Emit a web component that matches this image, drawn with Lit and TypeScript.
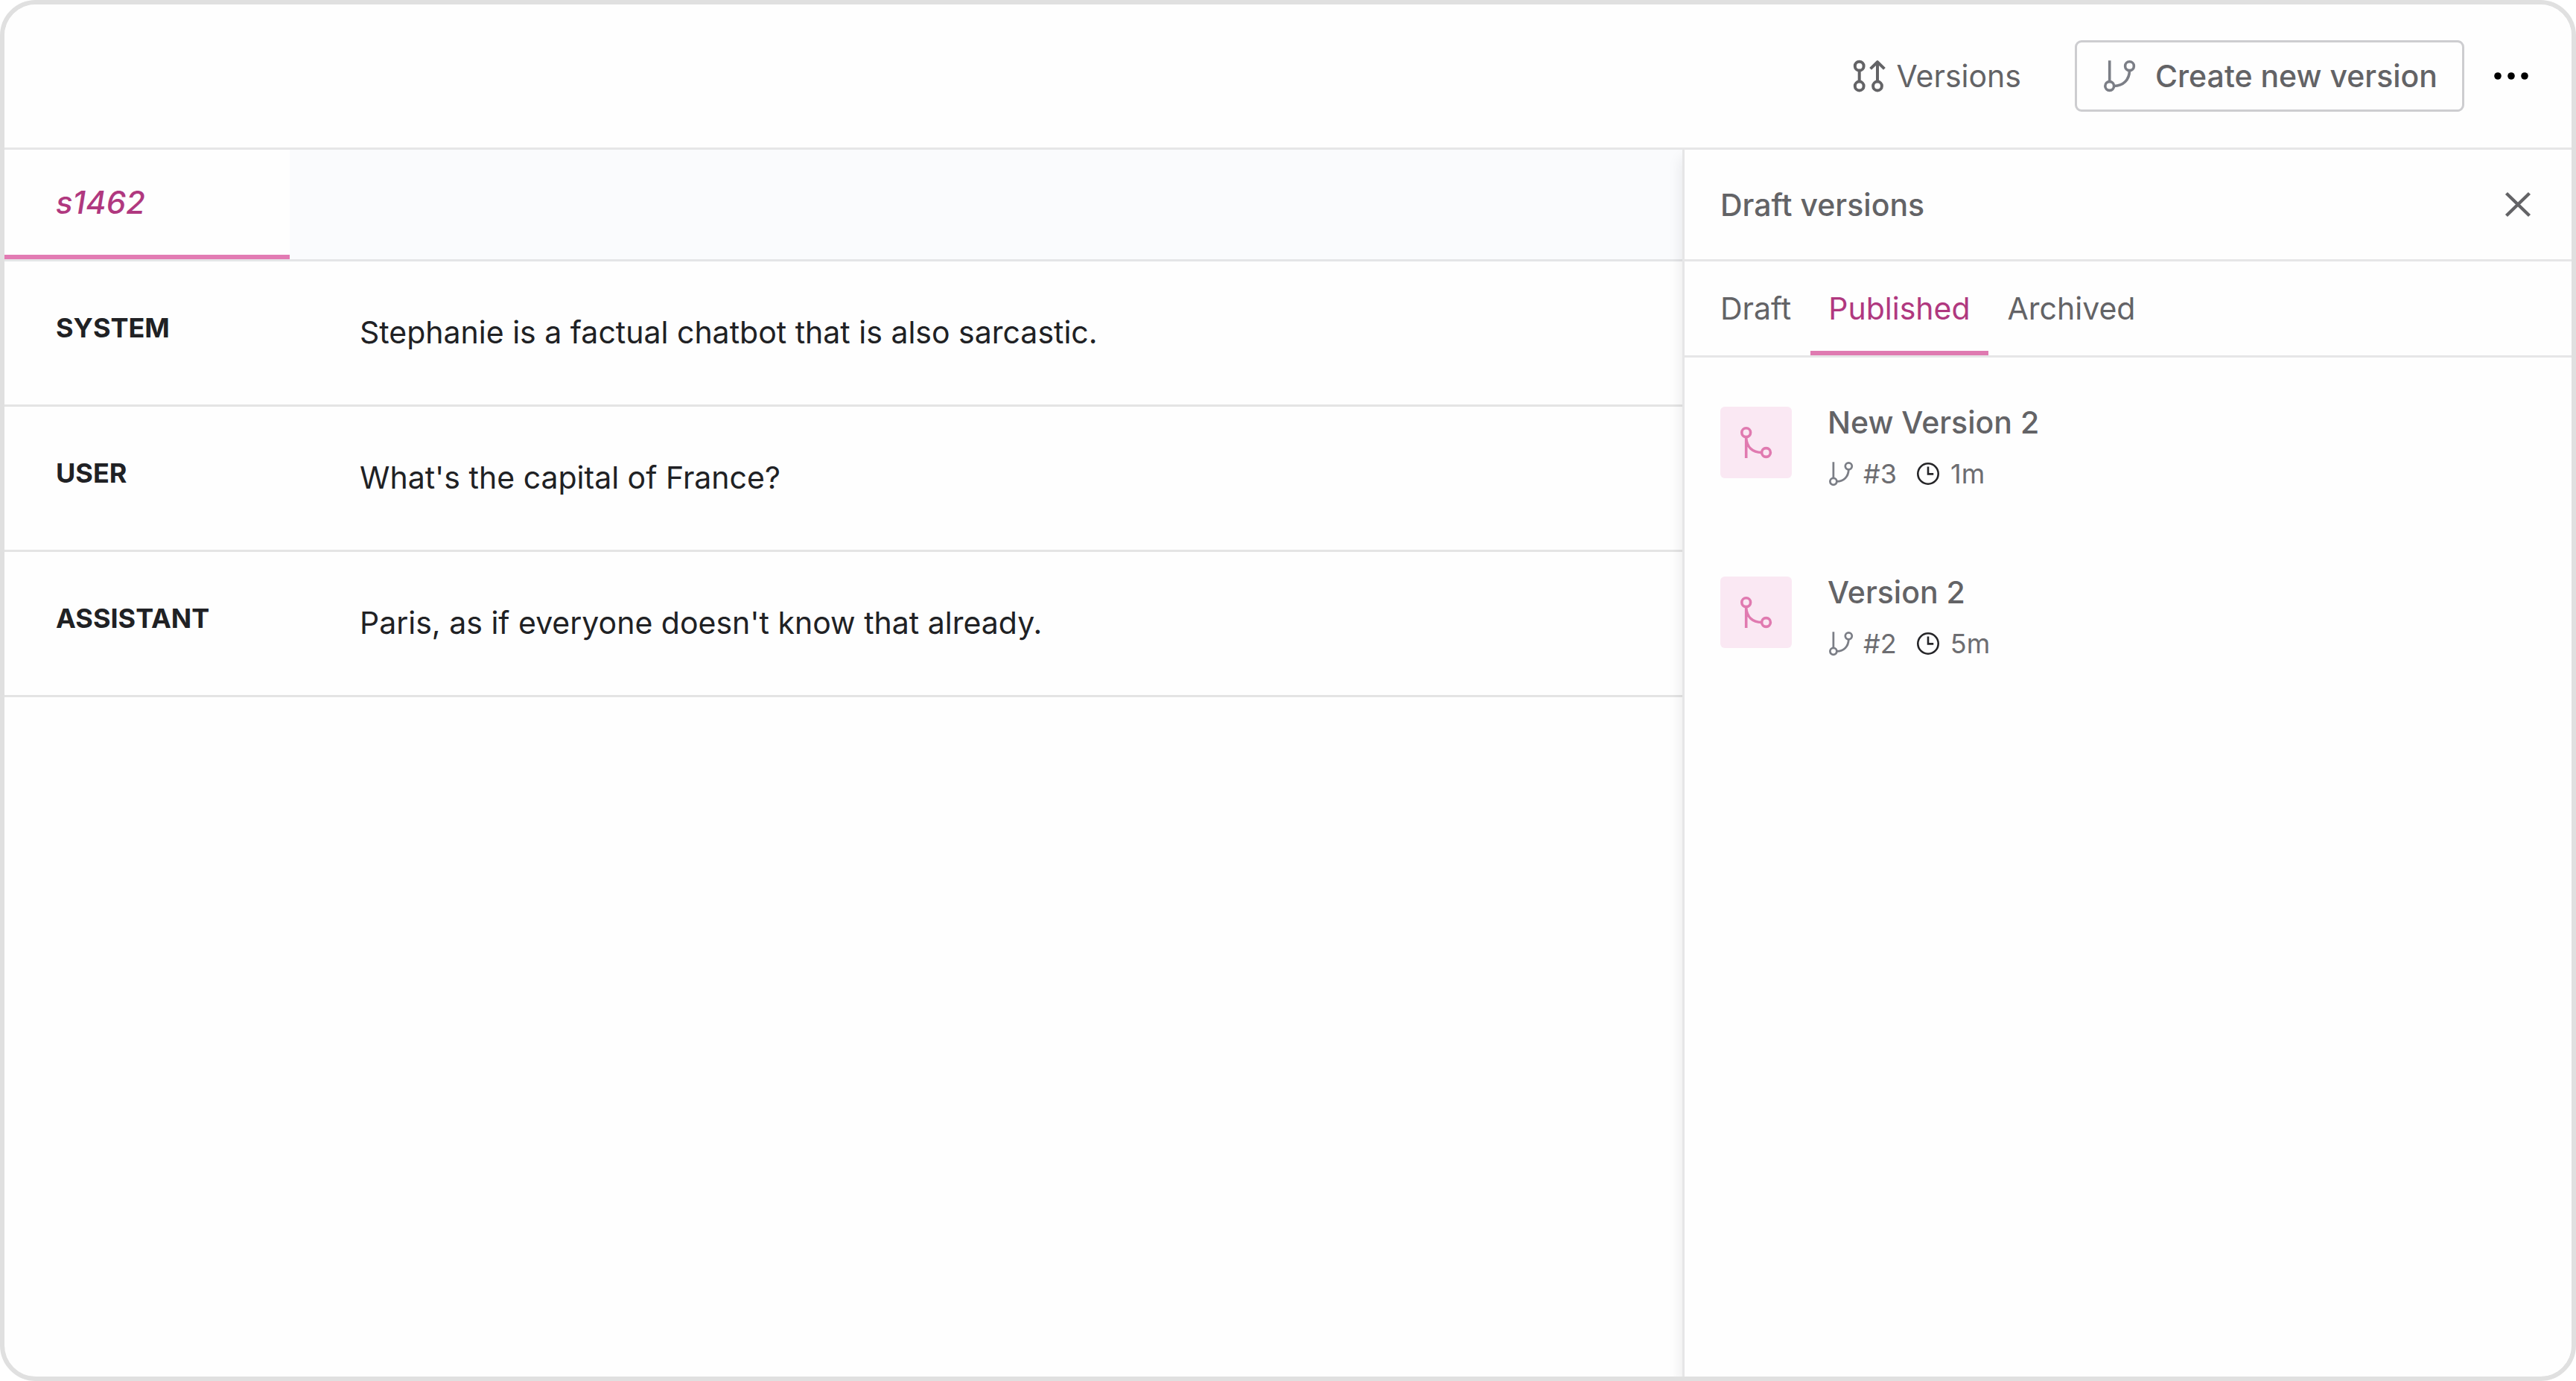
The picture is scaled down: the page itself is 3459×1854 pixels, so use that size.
import { LitElement, css, html, nothing, svg } from "lit";
import { customElement, property, state } from "lit/decorators.js";

type IconName = "compare" | "branch" | "merge" | "clock" | "close" | "more";

const ICONS = {
  compare: svg`
    <g stroke-width="4">
      <circle cx="7.7" cy="7.7" r="5.9" />
      <circle cx="7.7" cy="34.5" r="5.9" />
      <circle cx="32" cy="34.5" r="5.9" />
      <path d="M7.7 13.6V28.6M32 28.6V2.5M22.6 11.4L32 2.2L41.4 11.4" stroke-linejoin="round" />
    </g>`,
  branch: svg`
    <g stroke-width="3.6">
      <path d="M7.7 0.2V28.6M13.6 34.5C26 34.2 34.2 26.5 34.5 13.6" />
      <circle cx="7.7" cy="34.5" r="5.9" />
      <circle cx="34.5" cy="7.7" r="5.9" />
    </g>`,
  merge: svg`
    <g stroke-width="3.6">
      <path d="M7.7 13.6V42M7.7 15C8.5 27 16 34.6 28.6 34.5" />
      <circle cx="7.7" cy="7.7" r="5.9" />
      <circle cx="34.5" cy="34.5" r="5.9" />
    </g>`,
  clock: svg`
    <g stroke-width="3.4">
      <circle cx="21" cy="21" r="18" />
      <path d="M21 8.5V21.5H30.5" />
    </g>`,
  close: svg`<path d="M5.5 5.5L36.5 35.5M36.5 5.5L5.5 35.5" stroke-width="4.4" />`,
  more: svg`
    <g fill="currentColor" stroke="none">
      <circle cx="3" cy="21" r="4.8" />
      <circle cx="21" cy="21" r="4.8" />
      <circle cx="39" cy="21" r="4.8" />
    </g>`,
};

@customElement("ui-icon")
export class UiIcon extends LitElement {
  @property() name: IconName = "branch";

  static styles = css`
    :host {
      display: block;
      box-sizing: border-box;
      flex: none;
      width: 42px;
      height: 42px;
    }
    .glyph {
      display: block;
      width: 100%;
      height: 100%;
      overflow: visible;
      fill: none;
      stroke: currentColor;
    }
  `;

  render() {
    return html`<svg class="glyph" viewBox="0 0 42 42" aria-hidden="true">${ICONS[this.name]}</svg>`;
  }
}

interface Version {
  title: string;
  number: number;
  age: string;
}

@customElement("versions-panel")
export class VersionsPanel extends LitElement {
  @state() private selected = "Published";

  private readonly tabs = ["Draft", "Published", "Archived"];

  private readonly versions: Version[] = [
    { title: "New Version 2", number: 3, age: "1m" },
    { title: "Version 2", number: 2, age: "5m" },
  ];

  static styles = css`
    :host {
      display: flex;
      flex-direction: column;
      color: #636366;
    }
    .head {
      display: flex;
      align-items: center;
      justify-content: space-between;
      height: 147px;
      padding: 0 51px 0 48px;
      border-bottom: 3px solid #e6e6e7;
    }
    .heading,
    .title {
      margin: 0;
      font-size: 41px;
      line-height: 42px;
      font-weight: 500;
    }
    .close,
    .tab {
      margin: 0;
      border: 0;
      background: none;
      color: inherit;
      font: inherit;
      cursor: pointer;
    }
    .close {
      padding: 0;
    }
    .tabs {
      display: flex;
      gap: 2px;
      height: 126px;
      padding: 0 24px;
      border-bottom: 3px solid #e6e6e7;
    }
    .tab {
      padding: 0 24px;
    }
    .tab[aria-selected="true"] {
      color: #b0387f;
      box-shadow: inset 0 -6px #df7ab1;
    }
    .list {
      display: flex;
      flex-direction: column;
      gap: 111px;
      margin: 0;
      padding: 66px 48px;
      list-style: none;
    }
    .item {
      display: flex;
      gap: 48px;
    }
    .badge {
      display: flex;
      align-items: center;
      justify-content: center;
      width: 96px;
      height: 96px;
      border-radius: 6px;
      background: #fae8f3;
      color: #e07ab0;
    }
    .body {
      display: flex;
      flex-direction: column;
      gap: 21px;
    }
    .meta {
      display: flex;
      gap: 24px;
      font-size: 36px;
      line-height: 54px;
      color: #6d6d71;
    }
    .fact {
      display: flex;
      align-items: center;
      gap: 12px;
    }
    .small {
      width: 36px;
      height: 36px;
      padding: 2px;
      color: #7b7e86;
    }
    .dark {
      color: #252528;
    }
  `;

  render() {
    return html`
      <header class="head">
        <h2 class="heading">Draft versions</h2>
        <button class="close" aria-label="Close"><ui-icon name="close"></ui-icon></button>
      </header>
      <div class="tabs" role="tablist" aria-label="Version status">
        ${this.tabs.map(
          (tab) => html`<button
            class="tab"
            role="tab"
            aria-selected=${tab === this.selected ? "true" : "false"}
            @click=${() => (this.selected = tab)}
          >${tab}</button>`
        )}
      </div>
      ${this.selected === "Published"
        ? html`<ul class="list">${this.versions.map((v) => this.renderVersion(v))}</ul>`
        : nothing}
    `;
  }

  private renderVersion(v: Version) {
    return html`
      <li class="item">
        <div class="badge"><ui-icon name="merge"></ui-icon></div>
        <div class="body">
          <h3 class="title">${v.title}</h3>
          <div class="meta">
            <span class="fact"><ui-icon class="small" name="branch"></ui-icon>#${v.number}</span>
            <span class="fact"><ui-icon class="small dark" name="clock"></ui-icon>${v.age}</span>
          </div>
        </div>
      </li>
    `;
  }
}

@customElement("app-root")
export class AppRoot extends LitElement {
  private readonly messages = [
    { role: "SYSTEM", text: "Stephanie is a factual chatbot that is also sarcastic." },
    { role: "USER", text: "What's the capital of France?" },
    { role: "ASSISTANT", text: "Paris, as if everyone doesn't know that already." },
  ];

  static styles = css`
    :host {
      display: block;
      background: #fff;
      font-family: Inter, "Liberation Sans", sans-serif;
      font-size: 41px;
      line-height: 63px;
      color: #202124;
    }
    .frame {
      display: flex;
      flex-direction: column;
      box-sizing: border-box;
      min-height: 100vh;
      overflow: hidden;
      border: 6px solid #e0e0e0;
      border-radius: 48px;
      background: #fefefe;
    }
    .bar {
      position: relative;
      z-index: 1;
      display: flex;
      align-items: center;
      justify-content: flex-end;
      height: 192px;
      padding: 0 60px;
      border-bottom: 3px solid #e6e6e7;
      background: #fefefe;
    }
    .action {
      display: flex;
      align-items: center;
      margin: 0;
      padding: 0;
      border: 0;
      background: none;
      color: #636366;
      font: inherit;
      cursor: pointer;
    }
    .versions {
      gap: 15px;
      margin-right: 72px;
    }
    .create {
      box-sizing: border-box;
      gap: 27px;
      height: 96px;
      margin-right: 42px;
      padding: 0 33px 0 36px;
      border: 3px solid #cdcdd0;
      border-radius: 9px;
      font-weight: 500;
    }
    .muted {
      color: #7b7e86;
    }
    .more {
      color: #000;
    }
    .content {
      display: flex;
      flex: 1;
    }
    .main {
      flex: 1;
      min-width: 0;
    }
    .files {
      display: flex;
      height: 147px;
      border-bottom: 3px solid #e4e5e7;
      background: #fafbfd;
    }
    .file {
      box-sizing: border-box;
      width: 383px;
      margin: 0;
      padding: 0 69px;
      border: 0;
      border-bottom: 6px solid #e27bb3;
      background: #fefefe;
      color: #b0387f;
      font: inherit;
      font-size: 42px;
      font-style: italic;
      font-weight: 500;
      text-align: left;
      cursor: pointer;
    }
    .message {
      display: grid;
      grid-template-columns: 408px 1fr;
      box-sizing: border-box;
      min-height: 195px;
      padding: 64px 69px;
      border-bottom: 3px solid #e4e4e4;
    }
    .role {
      margin: 0;
      font-size: 36px;
      line-height: 51px;
      font-weight: 700;
    }
    .text {
      margin: 0;
    }
    .panel {
      flex: none;
      width: 1191px;
      border-left: 3px solid #e6e6e7;
      background: #fefefe;
      box-shadow: 0 12px 18px rgba(30, 30, 40, 0.1);
    }
  `;

  render() {
    return html`
      <div class="frame">
        <header class="bar">
          <button class="action versions"><ui-icon name="compare"></ui-icon>Versions</button>
          <button class="action create">
            <ui-icon class="muted" name="branch"></ui-icon>Create new version
          </button>
          <button class="action more" aria-label="More options"><ui-icon name="more"></ui-icon></button>
        </header>
        <div class="content">
          <main class="main">
            <div class="files" role="tablist" aria-label="Open prompts">
              <button class="file" role="tab" aria-selected="true">s1462</button>
            </div>
            ${this.messages.map(
              (m) => html`
                <section class="message">
                  <h2 class="role">${m.role}</h2>
                  <p class="text">${m.text}</p>
                </section>
              `
            )}
          </main>
          <versions-panel class="panel"></versions-panel>
        </div>
      </div>
    `;
  }
}
